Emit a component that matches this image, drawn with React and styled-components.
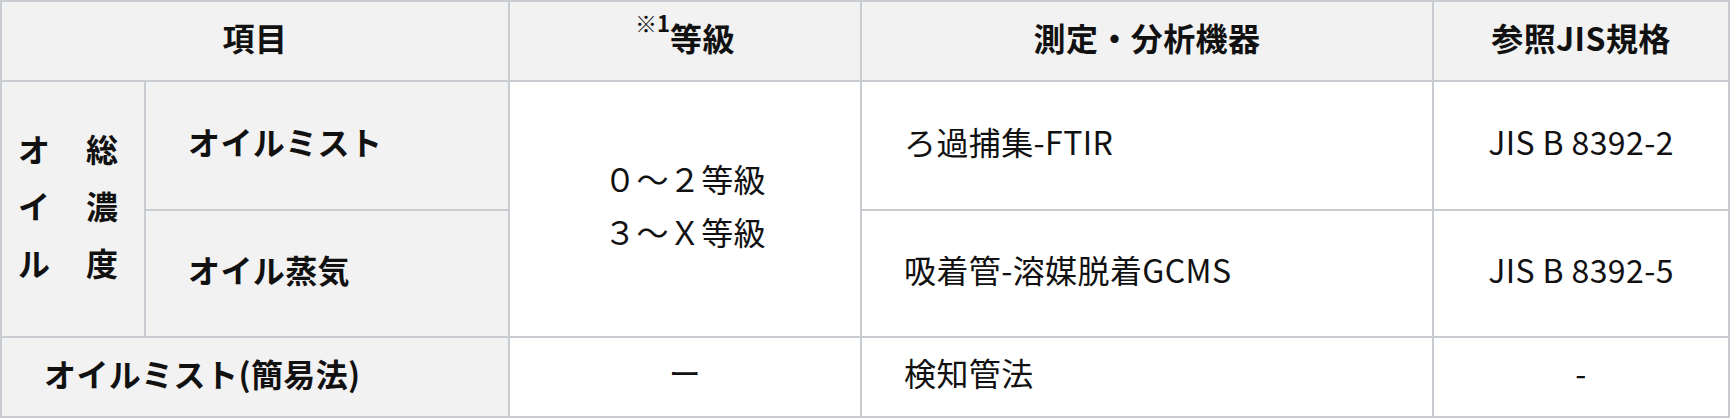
import React from "react";
import styled, { createGlobalStyle } from "styled-components";

const LINE = "#c9ccd0";
const SHADE = "#f2f2f2";

const GlobalStyle = createGlobalStyle`
  html, body {
    margin: 0;
    padding: 0;
    background: #fff;
  }
  body {
    font-family: "Noto Sans CJK JP", "Noto Sans", sans-serif;
    color: #111;
  }
`;

const Table = styled.table`
  width: 1730px;
  table-layout: fixed;
  border-collapse: separate;
  border-spacing: 0;
  border-top: 2px solid ${LINE};
  border-left: 2px solid ${LINE};
  font-size: 32px;
  line-height: 1.4;
  letter-spacing: 0.4px;
`;

const Col = styled.col`
  width: ${(p) => p.$w}px;
`;

const Row = styled.tr`
  height: ${(p) => p.$h}px;
`;

const Head = styled.th`
  box-sizing: border-box;
  padding: 0 0 8px;
  border-right: 2px solid ${LINE};
  border-bottom: 2px solid ${LINE};
  background: ${SHADE};
  font-weight: 700;
  text-align: center;
  vertical-align: middle;
`;

const RowLabel = styled(Head)`
  text-align: left;
  padding-left: 42px;
`;

const Cell = styled.td`
  box-sizing: border-box;
  padding: 0 0 9px ${(p) => (p.$left ? 42 : 0)}px;
  border-right: 2px solid ${LINE};
  border-bottom: 2px solid ${LINE};
  background: #fff;
  text-align: ${(p) => (p.$left ? "left" : "center")};
  vertical-align: middle;
`;

const GradeLines = styled.div`
  line-height: 53px;
`;

const Note = styled.sup`
  font-size: 22px;
  line-height: 0;
  vertical-align: 19px;
  font-weight: 400;
  letter-spacing: 0;

  b {
    font-weight: 700;
  }
`;

const GroupCell = styled(Head)`
  padding: 0 0 8px 16px;
`;

const LabelGrid = styled.div`
  display: grid;
  grid-template-columns: repeat(2, 32px);
  grid-template-rows: repeat(3, 32px);
  grid-auto-flow: column;
  column-gap: 36px;
  row-gap: 25px;
  line-height: 32px;
`;

const label = "オイル総濃度".split("");

export default function App() {
  return (
    <>
      <GlobalStyle />
      <Table>
        <colgroup>
          <Col $w={144} />
          <Col $w={364} />
          <Col $w={352} />
          <Col $w={572} />
          <Col $w={296} />
        </colgroup>
        <thead>
          <Row $h={80}>
            <Head colSpan={2}>項目</Head>
            <Head>
              <Note>
                ※<b>1</b>
              </Note>
              等級
            </Head>
            <Head>測定・分析機器</Head>
            <Head>参照JIS規格</Head>
          </Row>
        </thead>
        <tbody>
          <Row $h={129}>
            <GroupCell rowSpan={2}>
              <LabelGrid>
                {label.map((ch, i) => (
                  <span key={i}>{ch}</span>
                ))}
              </LabelGrid>
            </GroupCell>
            <RowLabel>オイルミスト</RowLabel>
            <Cell rowSpan={2}>
              <GradeLines>
                ０～２等級
                <br />
                ３～Ｘ等級
              </GradeLines>
            </Cell>
            <Cell $left>ろ過捕集-FTIR</Cell>
            <Cell>JIS B 8392-2</Cell>
          </Row>
          <Row $h={127}>
            <RowLabel>オイル蒸気</RowLabel>
            <Cell $left>吸着管-溶媒脱着GCMS</Cell>
            <Cell>JIS B 8392-5</Cell>
          </Row>
          <Row $h={80}>
            <RowLabel colSpan={2}>オイルミスト(簡易法)</RowLabel>
            <Cell>ー</Cell>
            <Cell $left>検知管法</Cell>
            <Cell>-</Cell>
          </Row>
        </tbody>
      </Table>
    </>
  );
}
